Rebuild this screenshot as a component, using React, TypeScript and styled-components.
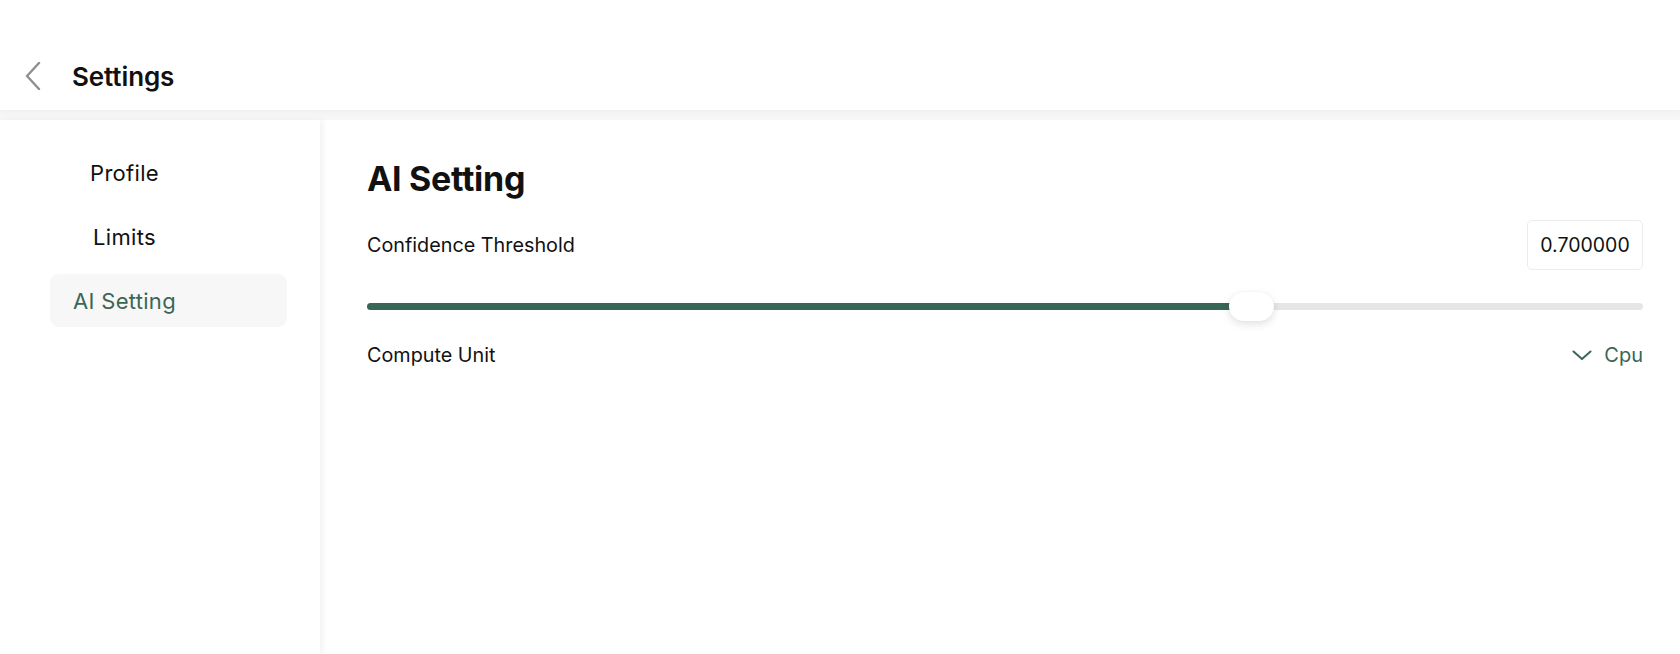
import React, { useState } from "react";
import styled, { createGlobalStyle } from "styled-components";

const GlobalStyle = createGlobalStyle`
  * { box-sizing: border-box; }
  html, body {
    margin: 0;
    padding: 0;
    background: #f7f7f7;
    font-family: Inter, "Noto Sans", "Liberation Sans", sans-serif;
    color: #111;
  }
`;

const ACCENT = "#3a6656";

const Page = styled.div`
  display: flex;
  flex-direction: column;
  min-height: 100vh;
`;

const Header = styled.header`
  position: relative;
  z-index: 2;
  display: flex;
  align-items: center;
  height: 110px;
  padding: 42px 0 0 17px;
  background: #fff;
  box-shadow: 0 2px 8px rgba(0, 0, 0, 0.04);
`;

const BackButton = styled.button`
  display: flex;
  align-items: center;
  justify-content: center;
  width: 32px;
  height: 40px;
  padding: 0;
  border: none;
  background: transparent;
  cursor: pointer;
`;

const Title = styled.h1`
  margin: 0 0 0 23px;
  font-size: 26px;
  font-weight: 600;
  letter-spacing: -0.1px;
  color: #111;
`;

const Body = styled.div`
  flex: 1;
  display: flex;
  margin-top: 10px;
`;

const Sidebar = styled.nav`
  position: relative;
  z-index: 1;
  width: 320px;
  flex-shrink: 0;
  display: flex;
  flex-direction: column;
  gap: 11px;
  padding: 26px 0 0 50px;
  background: #fff;
  box-shadow: 3px 0 6px rgba(0, 0, 0, 0.05);
`;

const NavItem = styled.button<{ $active?: boolean }>`
  display: flex;
  align-items: center;
  width: 237px;
  height: 53px;
  padding: 0 0 0 22px;
  border: none;
  border-radius: 9px;
  background: ${(p) => (p.$active ? "#f7f7f7" : "transparent")};
  color: ${(p) => (p.$active ? ACCENT : "#111")};
  font-family: inherit;
  font-size: 22px;
  letter-spacing: 0.3px;
  font-weight: 400;
  cursor: pointer;
`;

const NavLabel = styled.span`
  display: inline-block;
  width: 105px;
  text-align: center;
  white-space: nowrap;
`;

const Main = styled.main`
  flex: 1;
  padding: 39px 37px 0 47px;
  background: #fff;
`;

const Heading = styled.h2`
  margin: 0;
  font-size: 34px;
  line-height: 40px;
  font-weight: 700;
  letter-spacing: -0.3px;
`;

const Row = styled.div<{ $height: number; $gap: number }>`
  display: flex;
  align-items: center;
  justify-content: space-between;
  height: ${(p) => p.$height}px;
  margin-top: ${(p) => p.$gap}px;
`;

const Label = styled.span`
  font-size: 19.8px;
  line-height: 24px;
  color: #111;
`;

const ValueBox = styled.div`
  display: flex;
  align-items: center;
  justify-content: center;
  width: 116px;
  height: 50px;
  border: 1px solid #ececf0;
  border-radius: 5px;
  font-size: 19.5px;
  color: #111;
`;

const SliderWrap = styled.div`
  position: relative;
  height: 30px;
  margin-top: 21px;
  display: flex;
  align-items: center;
`;

const Track = styled.div`
  position: relative;
  width: 100%;
  height: 7px;
  border-radius: 4px;
  background: #e6e6e6;
  overflow: hidden;
`;

const Fill = styled.div`
  height: 100%;
  background: ${ACCENT};
`;

const Thumb = styled.div`
  position: absolute;
  top: 1px;
  width: 45px;
  height: 29px;
  border-radius: 15px;
  background: #fff;
  box-shadow: 0 3px 8px rgba(0, 0, 0, 0.12), 0 0 1px rgba(0, 0, 0, 0.08);
`;

const Picker = styled.button`
  display: flex;
  align-items: center;
  gap: 12px;
  padding: 0;
  border: none;
  background: transparent;
  color: ${ACCENT};
  font-family: inherit;
  font-size: 20px;
  cursor: pointer;
`;

const THUMB = 45;

export default function App() {
  const [active] = useState("AI Setting");
  const value = 0.7;
  const items = ["Profile", "Limits", "AI Setting"];

  return (
    <>
      <GlobalStyle />
      <Page>
        <Header>
          <BackButton aria-label="Back">
            <svg width="16" height="28" viewBox="0 0 16 28">
              <polyline
                points="14,1 2,14 14,27"
                fill="none"
                stroke="#8e8e93"
                strokeWidth="2.4"
                strokeLinecap="round"
                strokeLinejoin="round"
              />
            </svg>
          </BackButton>
          <Title>Settings</Title>
        </Header>
        <Body>
          <Sidebar>
            {items.map((it) => (
              <NavItem key={it} $active={it === active}>
                <NavLabel>{it}</NavLabel>
              </NavItem>
            ))}
          </Sidebar>
          <Main>
            <Heading>AI Setting</Heading>
            <Row $height={50} $gap={21}>
              <Label>Confidence Threshold</Label>
              <ValueBox>{value.toFixed(6)}</ValueBox>
            </Row>
            <SliderWrap>
              <Track>
                <Fill style={{ width: `calc(${THUMB / 2}px + (100% - ${THUMB}px) * ${value})` }} />
              </Track>
              <Thumb style={{ left: `calc((100% - ${THUMB}px) * ${value})` }} />
            </SliderWrap>
            <Row $height={30} $gap={19}>
              <Label>Compute Unit</Label>
              <Picker>
                <svg width="20" height="10" viewBox="0 0 20 10">
                  <polyline
                    points="1.5,1.5 10,9 18.5,1.5"
                    fill="none"
                    stroke={ACCENT}
                    strokeWidth="2"
                    strokeLinecap="round"
                    strokeLinejoin="round"
                  />
                </svg>
                Cpu
              </Picker>
            </Row>
          </Main>
        </Body>
      </Page>
    </>
  );
}
